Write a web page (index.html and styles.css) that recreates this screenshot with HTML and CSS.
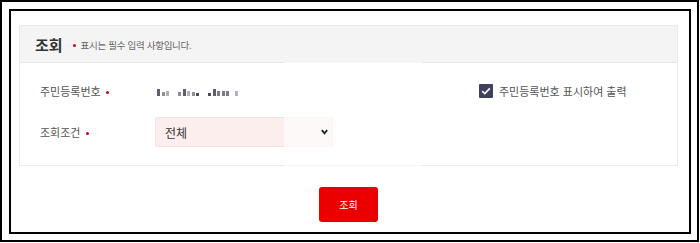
FILE: index.html
```html
<!DOCTYPE html>
<html lang="ko">
<head>
<meta charset="utf-8">
<link rel="stylesheet" href="styles.css">
</head>
<body>
<div class="frame">
  <div class="inner">
    <div class="content">
      <section class="panel">
        <div class="panel-head">
          <h2 class="title">조회</h2>
          <span class="dot"></span>
          <span class="note">표시는 필수 입력 사항입니다.</span>
        </div>
        <div class="panel-body">
          <div class="row">
            <div class="label">주민등록번호 <span class="dot"></span></div>
            <div class="value masked">
              <span class="px p1"></span><span class="px p2"></span><span class="px p3"></span>
              <span class="gap"></span>
              <span class="px p2"></span><span class="px p1"></span><span class="px p3"></span><span class="px p2"></span><span class="px p4"></span>
              <span class="gap"></span>
              <span class="px p4"></span><span class="px p1"></span><span class="px p5"></span><span class="px p5"></span><span class="px p5"></span><span class="gap small"></span><span class="px p3"></span>
            </div>
            <label class="check">
              <span class="box">
                <svg width="10" height="8" viewBox="0 0 10 8"><path d="M1.2 4.2 L3.8 6.6 L8.8 1.4" fill="none" stroke="#fff" stroke-width="1.6"/></svg>
              </span>
              <span class="check-text">주민등록번호 표시하여 출력</span>
            </label>
          </div>
          <div class="row">
            <div class="label">조회조건 <span class="dot"></span></div>
            <div class="select">
              <span class="select-text">전체</span>
              <svg class="arrow" width="7" height="6" viewBox="0 0 7 6"><path d="M0.8 1.2 L3.5 4.4 L6.2 1.2" fill="none" stroke="#222" stroke-width="1.8"/></svg>
            </div>
          </div>
        </div>
        <div class="veil"></div>
      </section>
      <div class="actions">
        <button class="btn" type="button">조회</button>
      </div>
    </div>
  </div>
</div>
</body>
</html>
```
FILE: styles.css
```css
* { box-sizing: border-box; }
html, body { margin: 0; padding: 0; background: #fff; }
body {
  font-family: "Noto Sans CJK KR", "Noto Sans", sans-serif;
  color: #333;
}
.frame {
  width: 699px;
  height: 242px;
  border: 2px solid #000;
  padding: 7px;
}
.inner {
  width: 682px;
  height: 225px;
  border: 2px solid #000;
}
.content {
  padding: 14px 11px 0 8px;
}
.panel {
  position: relative;
  border: 1px solid #ebebeb;
  background: #fff;
}
.panel-head {
  height: 37px;
  background: #f4f4f4;
  border-bottom: 1px solid #e6e6e6;
  display: flex;
  align-items: center;
  padding-left: 15px;
}
.title {
  margin: 0;
  font-size: 15px;
  font-weight: 700;
  color: #333;
  line-height: 1;
  margin-right: 10px;
}
.dot {
  display: inline-block;
  width: 3px;
  height: 3px;
  border-radius: 50%;
  background: #d0021b;
  vertical-align: middle;
}
.panel-head .dot { margin-right: 5px; margin-top: 3px; }
.note {
  font-size: 9.5px;
  color: #666;
  letter-spacing: -0.3px;
  margin-top: 1px;
}
.panel-body {
  padding: 13px 20px 18px;
  display: flex;
  flex-direction: column;
  gap: 11px;
}
.row {
  height: 30px;
  display: flex;
  align-items: center;
}
.label {
  width: 115px;
  font-size: 11px;
  color: #555;
}
.label .dot { margin-left: 2px; margin-top: -1px; }
.masked {
  width: 324px;
  display: flex;
  align-items: flex-end;
  height: 10px;
  padding-left: 2px;
  gap: 1.5px;
}
.px { display: inline-block; width: 3px; }
.p1 { height: 7px; background: #5e5e70; }
.p2 { height: 4px; background: #8e8e9e; }
.p3 { height: 5px; background: #b0b0be; }
.p4 { height: 3px; background: #4c4c5e; }
.p5 { height: 5px; background: #7a7a8a; }
.gap { width: 6px; }
.gap.small { width: 3px; }
.check {
  display: flex;
  align-items: center;
  gap: 6px;
}
.box {
  width: 14px;
  height: 14px;
  background: #3d4159;
  border-radius: 1px;
  display: flex;
  align-items: center;
  justify-content: center;
}
.check-text {
  font-size: 11px;
  color: #555;
}
.select {
  width: 178px;
  height: 30px;
  background: #fdeeee;
  border: 1px solid #f7e2e2;
  border-radius: 2px;
  display: flex;
  align-items: center;
  justify-content: space-between;
  padding: 0 4px 0 9px;
}
.select-text {
  font-size: 12px;
  color: #333;
}
.arrow {
  position: relative;
  z-index: 1;
}
.veil {
  position: absolute;
  left: 264px;
  top: 36px;
  width: 138px;
  height: 106px;
  background: rgba(255,255,255,0.62);
}
.actions {
  display: flex;
  justify-content: center;
  padding-top: 21px;
}
.btn {
  width: 59px;
  height: 35px;
  border: 0;
  border-radius: 3px;
  background: #ea0000;
  color: #fff;
  font-family: "Noto Sans CJK KR", sans-serif;
  font-size: 10px;
  padding: 0;
}
```
